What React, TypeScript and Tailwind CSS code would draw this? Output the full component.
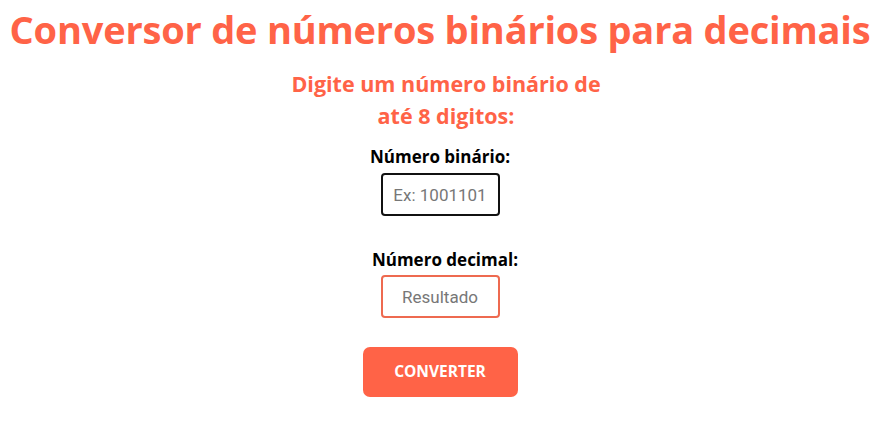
import React, { useState } from 'react';

const App: React.FC = () => {
  const [binary, setBinary] = useState('');
  const [decimal, setDecimal] = useState('');

  const converter = () => {
    if (/^[01]{1,8}$/.test(binary)) setDecimal(String(parseInt(binary, 2)));
  };

  return (
    <div className="min-h-[430px] bg-white flex flex-col items-center font-['Open_Sans','Noto_Sans',sans-serif]">
      <h1 className="mt-[5px] text-[38px] leading-[48px] font-bold text-[#ff6347] tracking-[-0.2px] whitespace-nowrap">
        Conversor de números binários para decimais
      </h1>
      <h3 className="mt-[15px] w-[340px] pl-[12px] text-center text-[21.5px] leading-[32px] font-bold text-[#ff6347]">
        Digite um número binário de até 8 digitos:
      </h3>

      <label className="mt-[12px] text-[17px] leading-[25px] font-bold text-black">Número binário:</label>
      <input
        value={binary}
        onChange={(e) => setBinary(e.target.value)}
        maxLength={8}
        placeholder="Ex: 1001101"
        className="mt-[4px] w-[119px] h-[43px] rounded-[4px] border-2 border-[#111] text-center text-[17px] font-['Roboto',sans-serif] placeholder:text-[#777] outline-none"
      />

      <label className="mt-[31px] pl-[10px] text-[17px] leading-[25px] font-bold text-black">Número decimal:</label>
      <input
        value={decimal}
        readOnly
        placeholder="Resultado"
        className="mt-[3px] w-[119px] h-[43px] rounded-[4px] border-2 border-[#ee6a50] text-center text-[17px] font-['Roboto',sans-serif] placeholder:text-[#777] outline-none"
      />

      <button
        onClick={converter}
        className="mt-[29px] w-[155px] h-[50px] rounded-[7px] bg-[#ff6347] text-white text-[15.5px] font-bold"
      >
        CONVERTER
      </button>
    </div>
  );
};

export default App;
